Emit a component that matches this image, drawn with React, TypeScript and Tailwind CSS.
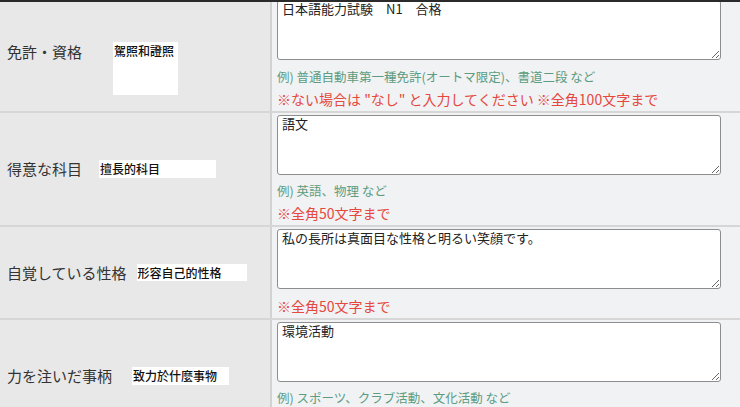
const font = { fontFamily: '"Noto Sans CJK JP", "Noto Sans", sans-serif' }

type Row = {
  label: string
  note: string
  noteClass: string
  value: string
  hint?: string
  limit: string
  cellClass: string
  innerClass: string
  hintMargin: string
  limitMargin: string
}

const rows: Row[] = [
  {
    label: '免許・資格',
    note: '駕照和證照',
    noteClass: 'ml-[31px] w-[65px] h-[53px]',
    value: '日本語能力試験　N1　合格',
    hint: '例) 普通自動車第一種免許(オートマ限定)、書道二段 など',
    limit: '※ない場合は "なし" と入力してください ※全角100文字まで',
    cellClass: 'items-start pt-[44px]',
    innerClass: 'items-start',
    hintMargin: 'mt-[6px]',
    limitMargin: '',
  },
  {
    label: '得意な科目',
    note: '擅長的科目',
    noteClass: 'ml-[17px] w-[117px] h-[18px]',
    value: '語文',
    hint: '例) 英語、物理 など',
    limit: '※全角50文字まで',
    cellClass: 'items-center',
    innerClass: 'items-center',
    hintMargin: 'mt-[5px]',
    limitMargin: '',
  },
  {
    label: '自覚している性格',
    note: '形容自己的性格',
    noteClass: 'ml-[10px] w-[110px] h-[17px]',
    value: '私の長所は真面目な性格と明るい笑顔です。',
    limit: '※全角50文字まで',
    cellClass: 'items-center',
    innerClass: 'items-center',
    hintMargin: '',
    limitMargin: 'mt-[6px]',
  },
  {
    label: '力を注いだ事柄',
    note: '致力於什麼事物',
    noteClass: 'ml-[20px] w-[97px] h-[18px]',
    value: '環境活動',
    hint: '例) スポーツ、クラブ活動、文化活動 など',
    limit: '※全角50文字まで',
    cellClass: 'items-center',
    innerClass: 'items-center',
    hintMargin: 'mt-[5px]',
    limitMargin: '',
  },
]

export default function App() {
  return (
    <div className="relative w-[740px] h-[407px] overflow-hidden bg-[#f1f2f4]" style={font}>
      {/* dark strip along the top edge */}
      <div className="absolute top-0 left-0 right-0 h-[2px] bg-[#2a2a2a] z-10" />

      <div className="-mt-[2px] flex flex-col">
        {rows.map((row, i) => (
          <div key={i} className="flex border-b-2 border-[#d6d6d6]">
            {/* label cell */}
            <div className={`w-[272px] shrink-0 flex pl-[7px] bg-[#e8e8e8] border-r-2 border-[#d2d2d2] ${row.cellClass}`}>
              <div className={`flex ${row.innerClass}`}>
                <span className="text-[15px] leading-[20px] text-[#333]">{row.label}</span>
                <div className={`bg-white pl-[1px] text-[12px] leading-[18px] font-medium text-[#111] ${row.noteClass}`}>
                  {row.note}
                </div>
              </div>
            </div>

            {/* input cell */}
            <div className="flex-1 pl-[5px] pt-[2px] pb-[1px] bg-[#f1f2f4]">
              <textarea
                readOnly
                defaultValue={row.value}
                className="block w-[444px] h-[60px] bg-white border border-[#8e8e8e] rounded-[3px] px-[4px] py-0 text-[13px] leading-[16px] text-[#222] outline-none"
              />
              {row.hint && (
                <p className={`${row.hintMargin} text-[12.5px] leading-[22px] text-[#5c9c80]`}>{row.hint}</p>
              )}
              <p className={`${row.limitMargin} text-[14px] leading-[22px] text-[#e5483d]`}>{row.limit}</p>
            </div>
          </div>
        ))}
      </div>
    </div>
  )
}
